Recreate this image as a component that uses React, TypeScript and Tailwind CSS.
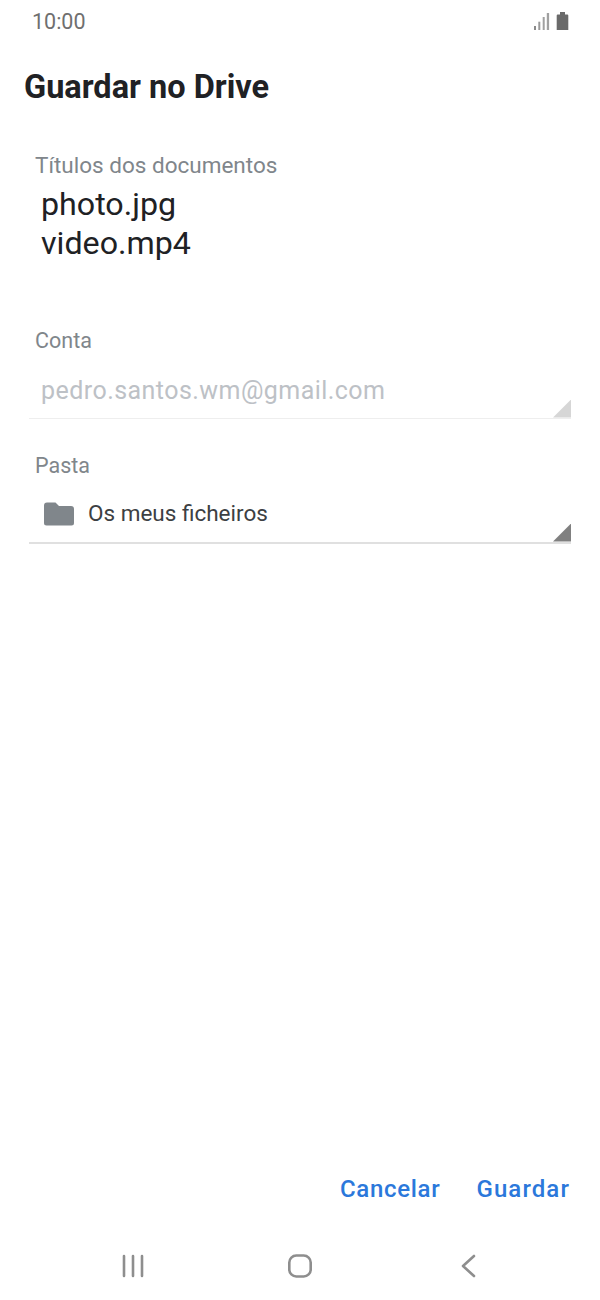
export default function App() {
  return (
    <div className="w-[600px] h-[1300px] bg-white flex flex-col font-['Roboto',sans-serif] overflow-hidden">
      {/* status bar */}
      <div className="h-[44px] pl-[32px] pr-[31px] flex justify-between items-center shrink-0">
        <span className="text-[21.500px] leading-[44px] text-[#6f6f6f]">10:00</span>
        <svg width="36" height="20" viewBox="0 0 36 20" fill="none">
          <rect x="1" y="14" width="2" height="4" fill="#8a8a8a" />
          <rect x="5.300" y="9.700" width="2" height="8.300" fill="#9a9a9a" />
          <rect x="9.700" y="5" width="2" height="13" fill="#a0a0a0" />
          <rect x="13.800" y="1" width="2.300" height="17" fill="#a0a0a0" />
          <path d="M27 0h5v2.500h2.300a1 1 0 0 1 1 1V18H23.700V3.500a1 1 0 0 1 1-1H27z" fill="#6a6a6a" />
        </svg>
      </div>

      <h1 className="mt-[23px] ml-[24px] text-[32.500px] leading-[40px] font-bold text-[#202124]">Guardar no Drive</h1>

      <div className="mt-[44px] pl-[35px] text-[22.500px] leading-[28px] text-[#80868b]">Títulos dos documentos</div>
      <div className="mt-[6px] pl-[41px] text-[32.200px] leading-[38.500px] text-[#202124]">
        <div>photo.jpg</div>
        <div>video.mp4</div>
      </div>

      <div className="mt-[64.500px] pl-[35px] text-[21.500px] leading-[28px] text-[#80868b]">Conta</div>
      <div className="relative mx-[29px] mt-[14px] h-[50px] border-b border-[#eeeeee] pl-[12px] text-[25px] leading-[44px] tracking-[0.45px] text-[#bdc1c6]">
        pedro.santos.wm@gmail.com
        <span className="absolute right-0 bottom-0 w-[18px] h-[18px] bg-[#d6d6d6] [clip-path:polygon(100%_0,100%_100%,0_100%)]" />
      </div>

      <div className="mt-[33px] pl-[35px] text-[21.500px] leading-[28px] text-[#80868b]">Pasta</div>
      <div className="relative mx-[29px] mt-[5px] h-[59px] pt-[2px] border-b-2 border-[#e0e0e0] flex items-center pl-[15px]">
        <svg width="30" height="24" viewBox="0 0 30 24" className="shrink-0">
          <path d="M3 0.500h8.500l3.500 3.500h12a3 3 0 0 1 3 3v14a2.500 2.500 0 0 1-2.500 2.500H2.500A2.500 2.500 0 0 1 0 21V3.500a3 3 0 0 1 3-3z" fill="#80868b" />
        </svg>
        <span className="ml-[14px] text-[22.500px] text-[#3c4043]">Os meus ficheiros</span>
        <span className="absolute right-0 bottom-0 w-[18px] h-[18px] bg-[#808080] [clip-path:polygon(100%_0,100%_100%,0_100%)]" />
      </div>

      <div className="flex-1" />

      {/* action buttons */}
      <div className="flex justify-end gap-[36px] pr-[30px] text-[24px] leading-[30px] font-medium text-[#2b78db]">
        <span className="tracking-[0.7px]">Cancelar</span>
        <span className="tracking-[1.1px]">Guardar</span>
      </div>

      {/* nav bar */}
      <div className="mt-[47px] mb-[19px] h-[30px] flex items-center pl-[122px] gap-[144px]">
        <svg width="22" height="24" viewBox="0 0 22 24" fill="none" stroke="#8e8e8e" strokeWidth="2.600" strokeLinecap="round">
          <path d="M2 2v20M11 2v20M20 2v20" />
        </svg>
        <svg width="24" height="24" viewBox="0 0 24 24" fill="none" stroke="#8e8e8e" strokeWidth="2.600">
          <rect x="1.300" y="1.500" width="21.400" height="21" rx="7" />
        </svg>
        <svg width="15" height="24" viewBox="0 0 15 24" fill="none" stroke="#8e8e8e" strokeWidth="2.600" strokeLinecap="round" strokeLinejoin="round" className="ml-[5px]">
          <path d="M13 2 2 12l11 10" />
        </svg>
      </div>
    </div>
  );
}
